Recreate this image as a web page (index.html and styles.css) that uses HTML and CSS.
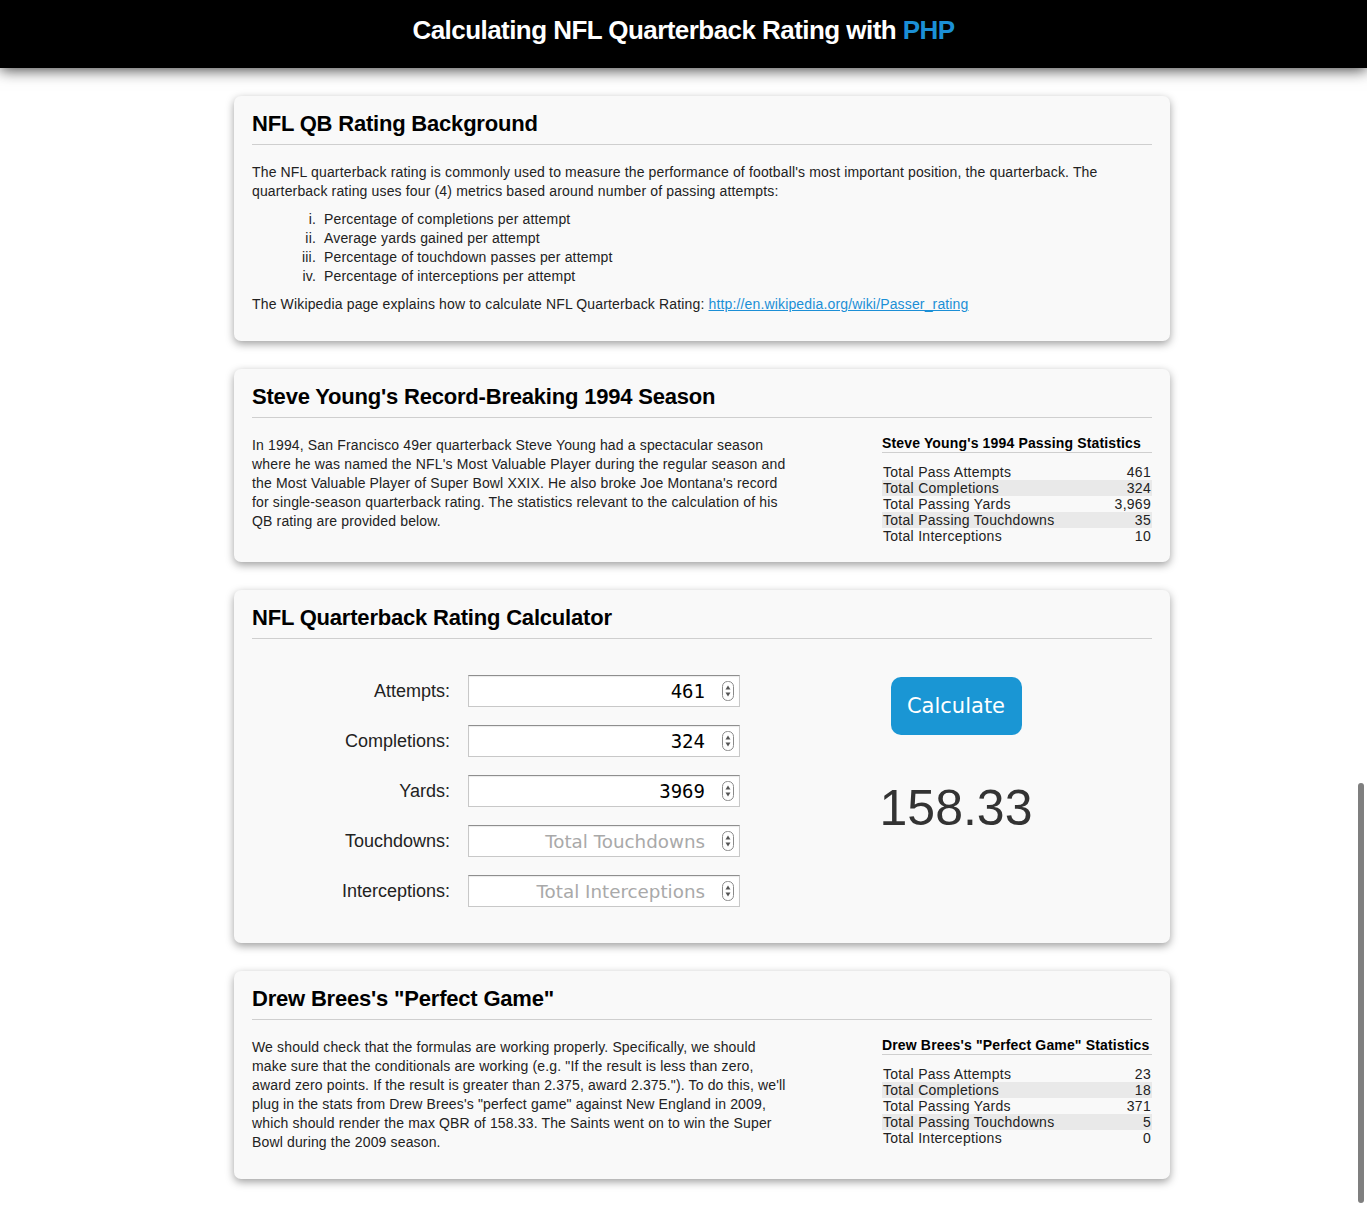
FILE: index.html
```html
<!DOCTYPE html>
<html lang="en">
<head>
<meta charset="utf-8">
<title>Calculating NFL Quarterback Rating with PHP</title>
<link rel="stylesheet" href="styles.css">
</head>
<body>
<header class="topbar">
  <h1 class="site-title">Calculating NFL Quarterback Rating with <span class="accent">PHP</span></h1>
</header>

<main class="container">
  <section class="card">
    <h2 class="card-title">NFL QB Rating Background</h2>
    <p class="text first">The NFL quarterback rating is commonly used to measure the performance of football's most important position, the quarterback. The quarterback rating uses four (4) metrics based around number of passing attempts:</p>
    <ol class="metrics">
      <li>Percentage of completions per attempt</li>
      <li>Average yards gained per attempt</li>
      <li>Percentage of touchdown passes per attempt</li>
      <li>Percentage of interceptions per attempt</li>
    </ol>
    <p class="text">The Wikipedia page explains how to calculate NFL Quarterback Rating: <a class="link" href="#">http://en.wikipedia.org/wiki/Passer_rating</a></p>
  </section>

  <section class="card">
    <h2 class="card-title">Steve Young's Record-Breaking 1994 Season</h2>
    <div class="split">
      <p class="text first narrow">In 1994, San Francisco 49er quarterback Steve Young had a spectacular season where he was named the NFL's Most Valuable Player during the regular season and the Most Valuable Player of Super Bowl XXIX. He also broke Joe Montana's record for single-season quarterback rating. The statistics relevant to the calculation of his QB rating are provided below.</p>
      <div class="stats">
        <h3 class="stats-title">Steve Young's 1994 Passing Statistics</h3>
        <table class="stats-table">
          <tr><td>Total Pass Attempts</td><td class="num">461</td></tr>
          <tr class="alt"><td>Total Completions</td><td class="num">324</td></tr>
          <tr><td>Total Passing Yards</td><td class="num">3,969</td></tr>
          <tr class="alt"><td>Total Passing Touchdowns</td><td class="num">35</td></tr>
          <tr><td>Total Interceptions</td><td class="num">10</td></tr>
        </table>
      </div>
    </div>
  </section>

  <section class="card calc-card">
    <h2 class="card-title">NFL Quarterback Rating Calculator</h2>
    <div class="calc">
      <form class="calc-form">
        <label class="field-label" for="att">Attempts:</label>
        <div class="field"><input id="att" class="field-input" type="text" value="461"><svg class="spinner" width="12" height="20" viewBox="0 0 12 20"><rect x="0.5" y="0.5" width="11" height="19" rx="5" fill="#fff" stroke="#8a8a8a"/><path d="M6 4.5 L8.5 8.5 L3.5 8.5 Z" fill="#555"/><path d="M6 15.5 L8.5 11.5 L3.5 11.5 Z" fill="#555"/></svg></div>

        <label class="field-label" for="cmp">Completions:</label>
        <div class="field"><input id="cmp" class="field-input" type="text" value="324"><svg class="spinner" width="12" height="20" viewBox="0 0 12 20"><rect x="0.5" y="0.5" width="11" height="19" rx="5" fill="#fff" stroke="#8a8a8a"/><path d="M6 4.5 L8.5 8.5 L3.5 8.5 Z" fill="#555"/><path d="M6 15.5 L8.5 11.5 L3.5 11.5 Z" fill="#555"/></svg></div>

        <label class="field-label" for="yds">Yards:</label>
        <div class="field"><input id="yds" class="field-input" type="text" value="3969"><svg class="spinner" width="12" height="20" viewBox="0 0 12 20"><rect x="0.5" y="0.5" width="11" height="19" rx="5" fill="#fff" stroke="#8a8a8a"/><path d="M6 4.5 L8.5 8.5 L3.5 8.5 Z" fill="#555"/><path d="M6 15.5 L8.5 11.5 L3.5 11.5 Z" fill="#555"/></svg></div>

        <label class="field-label" for="td">Touchdowns:</label>
        <div class="field"><input id="td" class="field-input" type="text" placeholder="Total Touchdowns"><svg class="spinner" width="12" height="20" viewBox="0 0 12 20"><rect x="0.5" y="0.5" width="11" height="19" rx="5" fill="#fff" stroke="#8a8a8a"/><path d="M6 4.5 L8.5 8.5 L3.5 8.5 Z" fill="#555"/><path d="M6 15.5 L8.5 11.5 L3.5 11.5 Z" fill="#555"/></svg></div>

        <label class="field-label" for="int">Interceptions:</label>
        <div class="field"><input id="int" class="field-input" type="text" placeholder="Total Interceptions"><svg class="spinner" width="12" height="20" viewBox="0 0 12 20"><rect x="0.5" y="0.5" width="11" height="19" rx="5" fill="#fff" stroke="#8a8a8a"/><path d="M6 4.5 L8.5 8.5 L3.5 8.5 Z" fill="#555"/><path d="M6 15.5 L8.5 11.5 L3.5 11.5 Z" fill="#555"/></svg></div>
      </form>
      <div class="result-col">
        <button class="calc-btn" type="button">Calculate</button>
        <div class="result">158.33</div>
      </div>
    </div>
  </section>

  <section class="card">
    <h2 class="card-title">Drew Brees's "Perfect Game"</h2>
    <div class="split">
      <p class="text first narrow">We should check that the formulas are working properly. Specifically, we should make sure that the conditionals are working (e.g. "If the result is less than zero, award zero points. If the result is greater than 2.375, award 2.375."). To do this, we'll plug in the stats from Drew Brees's "perfect game" against New England in 2009, which should render the max QBR of 158.33. The Saints went on to win the Super Bowl during the 2009 season.</p>
      <div class="stats">
        <h3 class="stats-title">Drew Brees's "Perfect Game" Statistics</h3>
        <table class="stats-table">
          <tr><td>Total Pass Attempts</td><td class="num">23</td></tr>
          <tr class="alt"><td>Total Completions</td><td class="num">18</td></tr>
          <tr><td>Total Passing Yards</td><td class="num">371</td></tr>
          <tr class="alt"><td>Total Passing Touchdowns</td><td class="num">5</td></tr>
          <tr><td>Total Interceptions</td><td class="num">0</td></tr>
        </table>
      </div>
    </div>
  </section>
</main>

<div class="scroll-thumb"></div>
</body>
</html>
```

FILE: styles.css
```css
html, body {
  margin: 0;
  padding: 0;
  background: #ffffff;
  font-family: "Liberation Sans", Arial, Helvetica, sans-serif;
  color: #222;
}

.topbar {
  height: 68px;
  background: #000;
  box-shadow: 0 2px 14px rgba(0, 0, 0, 0.75);
  display: flex;
  align-items: center;
  justify-content: center;
  position: relative;
  z-index: 2;
}

.site-title {
  margin: 0;
  color: #fff;
  font-size: 26px;
  font-weight: bold;
  line-height: 30px;
  letter-spacing: -0.55px;
  padding-bottom: 8px;
}

.accent {
  color: #1b8fd6;
}

.container {
  width: 936px;
  margin: 0 0 0 234px;
  padding: 28px 0 20px;
  display: flex;
  flex-direction: column;
  gap: 28px;
}

.card {
  background: #f9f9f9;
  border-radius: 7px;
  box-shadow: 0 3px 8px rgba(0, 0, 0, 0.38);
  padding: 13px 18px 18px;
}

.card-title {
  margin: 0;
  font-size: 22px;
  line-height: 30px;
  font-weight: bold;
  color: #000;
  padding-bottom: 5px;
  border-bottom: 1px solid #cfcfcf;
  letter-spacing: -0.2px;
}

.text {
  margin: 9px 0 9px;
  font-size: 14px;
  line-height: 19px;
  letter-spacing: 0.15px;
  color: #222;
}

.text.first {
  margin-top: 18px;
}

.metrics {
  list-style-type: lower-roman;
  margin: 0;
  padding-left: 68px;
  font-size: 14px;
  line-height: 19px;
  letter-spacing: 0.16px;
}

.metrics li {
  padding-left: 4px;
}

.link {
  color: #1b8fd6;
  text-decoration: underline;
}

.split {
  display: flex;
  justify-content: space-between;
  align-items: flex-start;
}

.narrow {
  width: 538px;
}

.stats {
  width: 270px;
  margin-top: 16px;
}

.stats-title {
  margin: 0;
  font-size: 14px;
  line-height: 18px;
  font-weight: bold;
  letter-spacing: 0.15px;
  white-space: nowrap;
  color: #000;
  padding-bottom: 0;
  border-bottom: 1px solid #cfcfcf;
}

.stats-table {
  width: 100%;
  border-collapse: collapse;
  margin-top: 11px;
  font-size: 14px;
  line-height: 16px;
  letter-spacing: 0.28px;
}

.stats-table td {
  padding: 0 1px;
  height: 16px;
}

.stats-table .num {
  text-align: right;
}

.stats-table .alt td {
  background: #e9e9e9;
}

.calc-card {
  padding-bottom: 36px;
}

.calc {
  display: flex;
  align-items: flex-start;
  margin-top: 36px;
}

.calc-form {
  width: 488px;
  display: grid;
  grid-template-columns: 198px 272px;
  column-gap: 18px;
  row-gap: 18px;
  align-items: center;
}

.field-label {
  text-align: right;
  font-size: 18px;
  color: #222;
  padding-top: 1px;
}

.field {
  height: 32px;
  box-sizing: border-box;
  border: 1px solid #c8c8c8;
  border-top-color: #8e8e8e;
  background: #fff;
  box-shadow: inset 0 1px 1px rgba(0, 0, 0, 0.08);
  display: flex;
  align-items: center;
  padding-right: 5px;
}

.field-input {
  flex: 1;
  min-width: 0;
  border: none;
  outline: none;
  background: transparent;
  text-align: right;
  font-family: "DejaVu Sans Mono", monospace;
  font-size: 19px;
  color: #000;
  padding: 0 17px 0 0;
  height: 28px;
}

.field-input::placeholder {
  font-family: "DejaVu Sans", sans-serif;
  font-size: 18.3px;
  color: #a9a9a9;
}

.spinner {
  flex: none;
  display: block;
}

.result-col {
  flex: 1;
  display: flex;
  flex-direction: column;
  align-items: center;
  padding-left: 20px;
}

.calc-btn {
  margin-top: 2px;
  width: 131px;
  height: 58px;
  border: none;
  border-radius: 10px;
  background: #1a96d4;
  color: #fff;
  font-family: "DejaVu Sans", sans-serif;
  font-size: 21px;
  cursor: pointer;
}

.result {
  margin-top: 43px;
  font-size: 50px;
  line-height: 60px;
  color: #333;
}

.scroll-thumb {
  position: fixed;
  right: 3px;
  top: 783px;
  width: 6px;
  height: 420px;
  border-radius: 3px;
  background: #7f7f7f;
}
```
